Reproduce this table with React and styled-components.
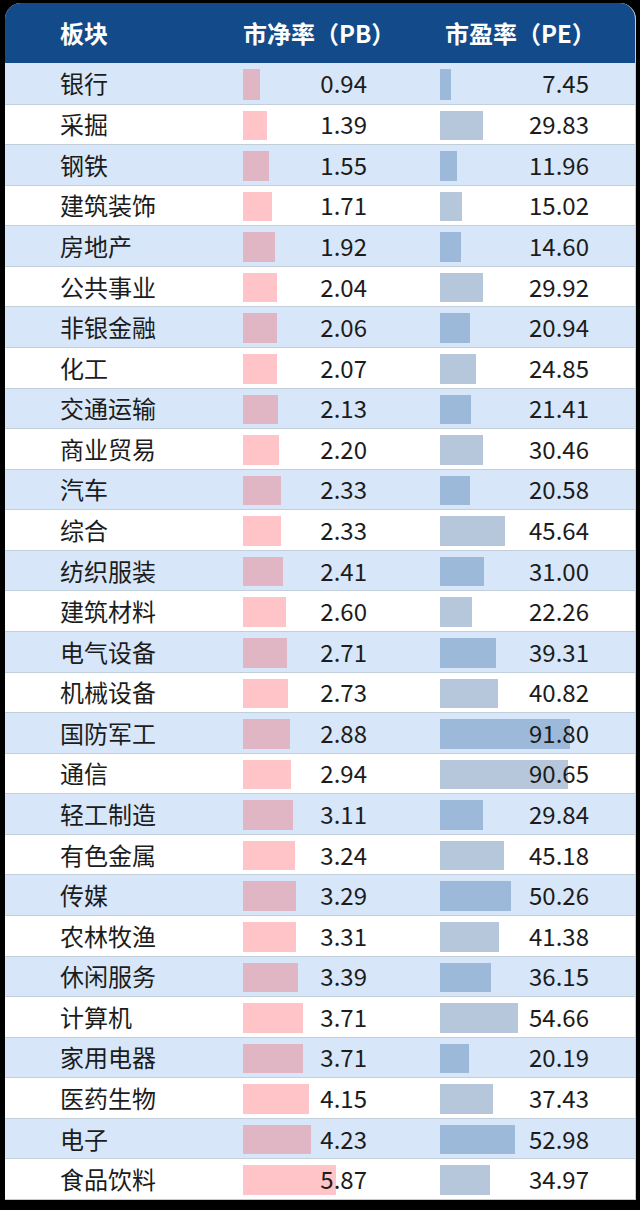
import React from 'react';
import styled, { createGlobalStyle } from 'styled-components';

const rows = [
  ['银行', 0.94, 7.45],
  ['采掘', 1.39, 29.83],
  ['钢铁', 1.55, 11.96],
  ['建筑装饰', 1.71, 15.02],
  ['房地产', 1.92, 14.6],
  ['公共事业', 2.04, 29.92],
  ['非银金融', 2.06, 20.94],
  ['化工', 2.07, 24.85],
  ['交通运输', 2.13, 21.41],
  ['商业贸易', 2.2, 30.46],
  ['汽车', 2.33, 20.58],
  ['综合', 2.33, 45.64],
  ['纺织服装', 2.41, 31.0],
  ['建筑材料', 2.6, 22.26],
  ['电气设备', 2.71, 39.31],
  ['机械设备', 2.73, 40.82],
  ['国防军工', 2.88, 91.8],
  ['通信', 2.94, 90.65],
  ['轻工制造', 3.11, 29.84],
  ['有色金属', 3.24, 45.18],
  ['传媒', 3.29, 50.26],
  ['农林牧渔', 3.31, 41.38],
  ['休闲服务', 3.39, 36.15],
  ['计算机', 3.71, 54.66],
  ['家用电器', 3.71, 20.19],
  ['医药生物', 4.15, 37.43],
  ['电子', 4.23, 52.98],
  ['食品饮料', 5.87, 34.97],
];

const GlobalStyle = createGlobalStyle`
  html, body {
    margin: 0;
    padding: 0;
    background: #000;
  }
  body {
    font-family: "Noto Sans CJK SC", "Noto Sans", sans-serif;
  }
`;

const Page = styled.div`
  width: 640px;
  height: 1210px;
  padding: 3px 0 0 5px;
  box-sizing: border-box;
`;

const Card = styled.div`
  width: 631px;
  border-radius: 16px 16px 0 0;
  overflow: hidden;
  background: #fff;
  border-right: 1px solid #c9c9c9;
  border-bottom: 1px solid #c9c9c9;
  box-sizing: border-box;
`;

const Grid = `
  display: grid;
  grid-template-columns: 238px 197px 1fr;
`;

const Header = styled.div`
  ${Grid};
  height: 60px;
  align-items: center;
  background: #134a89;
  color: #fff;
  font-size: 24px;
  font-weight: 700;
`;

const HeadCell = styled.div`
  padding-left: ${({ $pad }) => $pad}px;
  padding-bottom: 2px;
  white-space: nowrap;
`;

const Body = styled.div`
  display: grid;
  grid-template-rows: repeat(28, 1fr);
  height: 1136px;
`;

const Row = styled.div`
  ${Grid};
  align-items: stretch;
  background: ${({ $alt }) => ($alt ? '#d7e7f9' : '#ffffff')};
  border-top: 1px solid #c3cedb;
  color: #1c1c1c;
  font-size: 24px;
  &:first-child {
    border-top: none;
  }
`;

const Name = styled.div`
  display: flex;
  align-items: center;
  padding-left: 55px;
  padding-bottom: 1px;
`;

const BarCell = styled.div`
  position: relative;
  display: flex;
  align-items: center;
  justify-content: flex-end;
  padding-right: ${({ $pad }) => $pad}px;
  padding-bottom: 1px;
`;

const Bar = styled.div`
  position: absolute;
  left: 0;
  top: 6px;
  bottom: 4px;
  background: ${({ $color }) => $color};
`;

const Value = styled.span`
  position: relative;
`;

const fmt = (v) => v.toFixed(2);

export default function App() {
  return (
    <Page>
      <GlobalStyle />
      <Card>
        <Header>
          <HeadCell $pad={55}>板块</HeadCell>
          <HeadCell $pad={0}>市净率（PB）</HeadCell>
          <HeadCell $pad={5}>市盈率（PE）</HeadCell>
        </Header>
        <Body>
          {rows.map(([name, pb, pe], i) => {
            const alt = i % 2 === 0;
            return (
              <Row key={name} $alt={alt}>
                <Name>{name}</Name>
                <BarCell $pad={73}>
                  <Bar
                    $color={alt ? '#e0b6c5' : '#ffc4c8'}
                    style={{ width: `${pb * 15.4 + 2.5}px` }}
                  />
                  <Value>{fmt(pb)}</Value>
                </BarCell>
                <BarCell $pad={46}>
                  <Bar
                    $color={alt ? '#9cb9d9' : '#b6c7db'}
                    style={{ width: `${pe * 1.41 + 0.5}px` }}
                  />
                  <Value>{fmt(pe)}</Value>
                </BarCell>
              </Row>
            );
          })}
        </Body>
      </Card>
    </Page>
  );
}
